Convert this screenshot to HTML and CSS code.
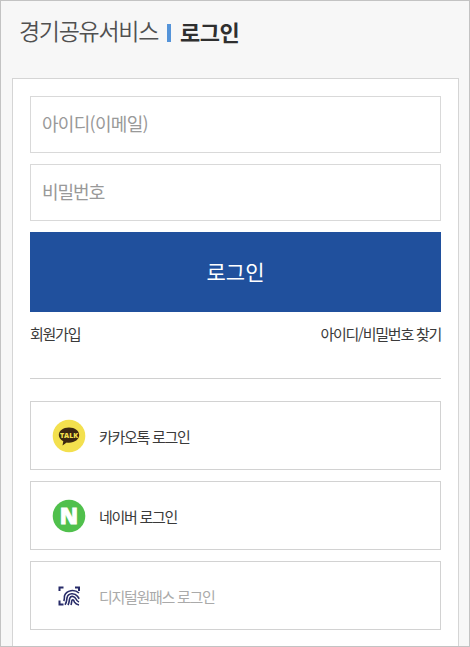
FILE: index.html
```html
<!DOCTYPE html>
<html lang="ko">
<head>
<meta charset="utf-8">
<title>로그인</title>
<link rel="stylesheet" href="styles.css">
</head>
<body>
<div class="page">
  <header class="header">
    <span class="service">경기공유서비스</span>
    <span class="bar"></span>
    <h1 class="title">로그인</h1>
  </header>
  <main class="card">
    <form class="form">
      <input class="field email" type="text" placeholder="아이디(이메일)">
      <input class="field" type="password" placeholder="비밀번호">
      <button class="submit" type="button">로그인</button>
    </form>
    <nav class="links">
      <a class="join">회원가입</a>
      <a class="find">아이디/비밀번호 찾기</a>
    </nav>
    <div class="social">
      <a class="provider">
        <svg class="icon" viewBox="0 0 34 34">
          <circle cx="17" cy="17" r="16.300" fill="#f3e04e"/>
          <path d="M17 8.500c5.900 0 10.200 3.300 10.200 7.600s-4.300 7.600-10.200 7.600c-.8 0-1.600 0-2.300-.2L10.500 26.500l.8-4.300C8.500 20.900 6.800 18.700 6.800 16.100c0-4.300 4.300-7.600 10.200-7.600z" fill="#3c2711"/>
          <text class="talk" x="17" y="18.700" text-anchor="middle">TALK</text>
        </svg>
        <span class="kakao">카카오톡 로그인</span>
      </a>
      <a class="provider">
        <svg class="icon" viewBox="0 0 34 34">
          <circle cx="17" cy="17" r="16.300" fill="#50c04c"/>
          <text class="naver-mark" x="17" y="24.700" text-anchor="middle">N</text>
        </svg>
        <span class="naver">네이버 로그인</span>
      </a>
      <a class="provider">
        <svg class="icon" viewBox="0 0 34 34" fill="none" stroke="#272b68">
          <path stroke-width="2" d="M7.500 12V8.500h4M23 8.500h4V12M7.500 21.500v4h4"/>
          <g stroke-width="1.600">
            <path d="M11.700 22c1.300-2 .3-3.500.9-5.500 2-5.500 9.900-6.500 14.400-2.500"/>
            <path d="M13 25.800c2-2.500 1.500-5 2.100-7.300 1.200-4.800 7.500-4.800 10.400-1.200l1.700 2.500"/>
            <path d="M16 26c1.600-3 1-4.800 1.800-6.800 1.400-3 5-1.800 6.200.8.700 1.500 1.600 2.500 3 3"/>
            <path d="M19 26c.7-1.800.4-3.400 1-4.800 1.600-1 1.900.8 2.500 2 .8 1.400 2 2.200 4.500 2.800"/>
          </g>
        </svg>
        <span class="onepass">디지털원패스 로그인</span>
      </a>
    </div>
  </main>
</div>
</body>
</html>
```

FILE: styles.css
```css
* {
  box-sizing: border-box;
}

body {
  margin: 0;
  font-family: "Noto Sans CJK KR", sans-serif;
  color: #3a3a3a;
}

.page {
  height: 647px;
  padding: 0 10px 0 11px;
  overflow: hidden;
  background: #f7f7f7;
  border: 1px solid #c3c3c3;
}

.header {
  display: flex;
  align-items: center;
  height: 77px;
  padding: 0 0 18px 7px;
}

.service {
  margin-top: -1px;
  font-size: 23px;
  font-weight: 350;
  letter-spacing: -1.300px;
  color: #505050;
}

.bar {
  width: 4px;
  height: 18px;
  margin: 4px 9px 0 9px;
  background: #5594d9;
}

.title {
  margin: 1px 0 0;
  font-size: 22px;
  font-weight: 700;
  letter-spacing: -.500px;
  color: #2f2f2f;
}

.card {
  height: 600px;
  padding: 16.500px 17px 0;
  background: #fff;
  border: 1px solid #d5d5d5;
}

.form {
  display: flex;
  flex-direction: column;
  gap: 11px;
}

.field {
  width: 100%;
  height: 57.250px;
  padding: 0 11px 2px;
  font: 18px "Noto Sans CJK KR", sans-serif;
  letter-spacing: -1px;
  background: #fff;
  border: 1px solid #d9d9d9;
  border-radius: 0;
}

.email {
  letter-spacing: -.700px;
}

.field::placeholder {
  color: #999;
}

.submit {
  height: 80px;
  padding: 0 0 2px;
  font: 21px "Noto Sans CJK KR", sans-serif;
  color: #fff;
  background: #20509d;
  border: 0;
}

.links {
  display: flex;
  justify-content: space-between;
  height: 67px;
  padding-top: 11px;
  font-size: 15px;
  line-height: 22px;
  letter-spacing: -1.250px;
  border-bottom: 1px solid #d0d0d0;
}

.social {
  display: grid;
  gap: 11px;
  padding-top: 22px;
}

.provider {
  display: flex;
  align-items: center;
  height: 69px;
  padding: 0 0 0 21px;
  gap: 13px;
  font-size: 15px;
  letter-spacing: -1.300px;
  border: 1px solid #d2d2d2;
}

.provider span {
  padding-top: 1px;
}

.icon {
  width: 34px;
  height: 34px;
}

.onepass {
  color: #aaa;
}

.talk {
  font: 800 7px "Open Sans", sans-serif;
  letter-spacing: 0;
  fill: #f3e04e;
}

.naver-mark {
  font: 800 22px "Open Sans", sans-serif;
  letter-spacing: 0;
  fill: #fff;
  stroke: #fff;
  stroke-width: .8px;
}
```
